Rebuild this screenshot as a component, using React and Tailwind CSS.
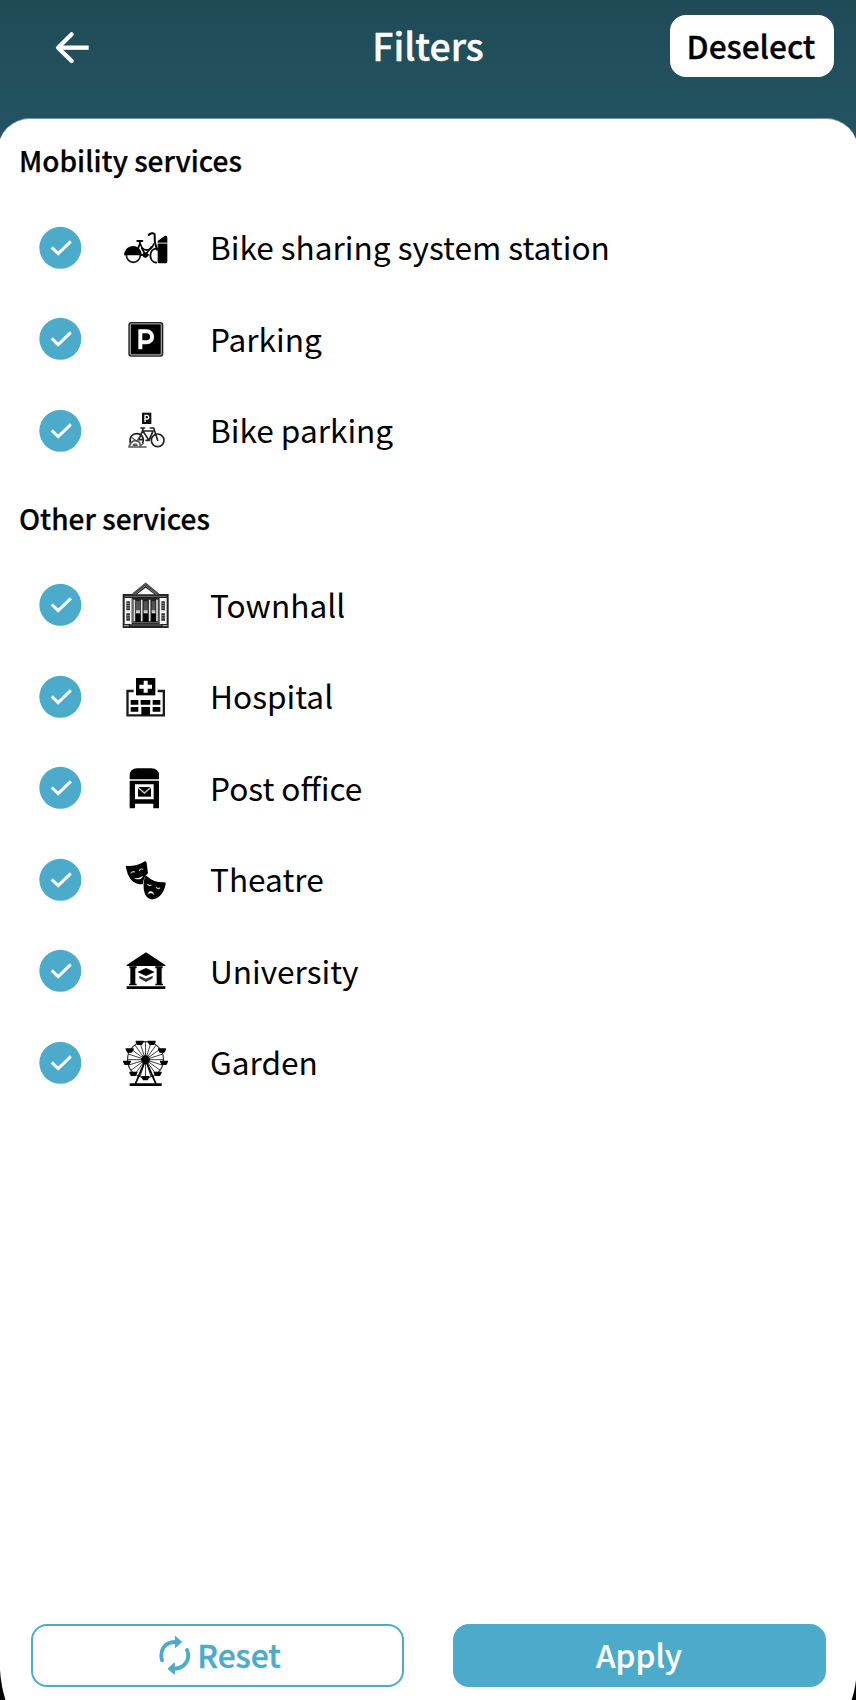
import React from "react";

const Check = () => (
  <svg viewBox="48 41 144 144" className="h-12 w-12 shrink-0">
    <circle cx="121" cy="112.500" r="63" fill="#4caaca" />
    <path d="M95 111 L114.500 130 L152.500 93" fill="none" stroke="#fff" strokeWidth="9" />
  </svg>
);

const Icon = ({ box, children }) => (
  <svg viewBox={box} className="h-12 w-12 shrink-0 overflow-visible" fill="#000">
    {children}
  </svg>
);

const BikeSharing = () => (
  <Icon box="306 41 144 144">
    <path d="M312 135 C313 118 324 107 340 107 C355 107 364 119 366 135 Z" />
    <path d="M319 134 A21 22 0 0 0 361 134" fill="none" stroke="#111" strokeWidth="5" />
    <g fill="none" stroke="#000" strokeLinecap="round" strokeLinejoin="round">
      <path d="M352 92 H367" strokeWidth="6" />
      <path d="M359 94 C362 107 365 115 374 118 C388 121 398 113 401 101" strokeWidth="5" />
      <path d="M386 74 C392 68 401 67 404 72 C405 82 402 93 407 104 L411 118" strokeWidth="6" />
      <path d="M359 100 L355 114 M365 113 L376 133 L394 110" strokeWidth="5" />
      <path d="M410 115 C386 115 384 154 409 157" strokeWidth="5.500" />
      <path d="M362 134 H384" strokeWidth="6" />
    </g>
    <circle cx="376" cy="134" r="8" />
    <path d="M413 97 L413 92 L434 77 Q442 75 442 82 V97 Z M413 101 H442 V154 Q442 159 437 159 H418 Q413 159 413 154 Z" />
    <path d="M413 99 H442" stroke="#888" strokeWidth="4" />
  </Icon>
);

const Parking = () => (
  <Icon box="306 -15 144 144">
    <rect x="325" y="6" width="105" height="104" rx="9" fill="#222" />
    <rect x="331" y="11.500" width="93" height="93" rx="4" fill="none" stroke="#999" strokeWidth="4" />
    <rect x="334" y="14" width="87" height="87" fill="#000" />
    <path d="M361 88 V34 H379 C402 34 402 67 379 67 H361" fill="none" stroke="#fff" strokeWidth="12" />
  </Icon>
);

const BikeParking = () => (
  <Icon box="306 260 144 144">
    <rect x="366" y="277" width="28" height="34" fill="#111" />
    <path d="M375 305 V285 H381 C388 285 388 296 381 296 H375" fill="none" stroke="#fff" strokeWidth="4" />
    <g fill="none" stroke="#222" strokeWidth="5" strokeLinecap="round" strokeLinejoin="round">
      <circle cx="413" cy="360" r="19" />
      <path d="M331 367 C327 349 338 340 350 340 C366 340 373 353 368 368" />
      <path d="M363 323 H374 M369 324 L368 331 L387 360 H378 M368 331 L356 358 H370 M369 332 H399 L387 360 M391 323 H401 L413 360" />
      <path d="M327 380 C331 366 339 361 347 361 C357 361 361 369 361 378 M327 380 H378" stroke="#555" />
      <path d="M339 375 C342 369 349 369 352 375 Z M336 352 L350 363 L359 349 M361 377 L370 369" stroke="#555" strokeWidth="3.500" />
    </g>
  </Icon>
);

const Townhall = () => (
  <Icon box="366 33 144 144">
    <path d="M368 72 H397 L437 38 L477 72 H506 V174 H368 Z" fill="#222" />
    <path d="M399 72 L437 41 L475 72" fill="none" stroke="#555" strokeWidth="5" />
    <path d="M404 74 L437 47 L470 74" fill="none" stroke="#888" strokeWidth="3" />
    <path d="M411 73 L437 53 L463 73 Z" fill="#fff" />
    <path d="M374 79 H500" stroke="#999" strokeWidth="2" />
    <path d="M374 84 H395 V162 H374 Z M479 84 H500 V162 H479 Z" fill="#f4f4f4" />
    <path d="M397 86 V156 M477 86 V156" stroke="#777" strokeWidth="3" />
    <path d="M379 94 H390 V121 H379 Z M379 130 H390 V152 H379 Z M484 94 H495 V121 H484 Z M484 130 H495 V152 H484 Z" fill="#333" />
    <path d="M379 100 H390 M379 107 H390 M379 114 H390 M379 137 H390 M379 144 H390 M484 100 H495 M484 107 H495 M484 114 H495 M484 137 H495 M484 144 H495" stroke="#aaa" strokeWidth="2" />
    <path d="M403 89 V154 M425 89 V154 M449 89 V154 M471 89 V154" stroke="#ddd" strokeWidth="5" />
    <path d="M408 94 H420 V121 H408 Z M431 94 H443 V121 H431 Z M455 94 H466 V121 H455 Z" fill="#555" />
    <path d="M408 121 H420 V130 H408 Z M431 121 H443 V130 H431 Z M455 121 H466 V130 H455 Z" fill="#ccc" />
    <path d="M407 132 H421 V155 H407 Z M430 132 H444 V155 H430 Z M454 132 H467 V155 H454 Z" />
    <path d="M397 158 H477 M390 165 H484" stroke="#777" strokeWidth="2.500" />
    <path d="M372 167 H386 M488 167 H502" stroke="#ddd" strokeWidth="2.500" />
  </Icon>
);

const Hospital = () => (
  <Icon box="366 307 144 144">
    <path d="M408 322 H466 V374 H408 Z" />
    <path d="M437 330 V366 M418 348 H456" stroke="#fff" strokeWidth="12" />
    <path d="M401 361 H382.500 V434 H491.500 V361 H473" fill="none" stroke="#1a1a1a" strokeWidth="7" />
    <path d="M392 388 H415 V402 H392 Z M422 388 H451 V402 H422 Z M458 388 H481 V402 H458 Z M392 409 H415 V423 H392 Z M458 409 H481 V423 H458 Z M424 409 H450 V434 H424 Z" />
  </Icon>
);

const PostOffice = () => (
  <Icon box="306 41 144 144">
    <path d="M329 86 V77 Q329 54 352 54 H394 Q417 54 417 77 V86 Z" />
    <path d="M330 89 H416" stroke="#bbb" strokeWidth="6" />
    <path fillRule="evenodd" d="M329 92 H417 V174 H400 V160 H345 V174 H329 Z M345 102 V147 H401 V102 Z" />
    <rect x="354" y="110" width="39" height="29" />
    <path d="M354 111 L373 128 L393 111" fill="none" stroke="#ccc" strokeWidth="4" />
  </Icon>
);

const Theatre = () => (
  <Icon box="306 317 144 144">
    <path d="M317 346 C340 350 361 343 374 333 Q379 331 380 338 L384 369 C375 377 370 386 369 401 C344 405 323 387 317 346 Z" />
    <path d="M374 381 Q377 373 383 379 C396 391 413 397 433 396 Q438 396 437 401 C432 429 415 449 392 447 C373 443 366 414 374 381 Z" />
    <g fill="none" stroke="#ccc" strokeLinecap="round">
      <path d="M333 368 Q338 361 344 365 M358 360 Q362 354 368 357" strokeWidth="3.500" />
      <path d="M344 383 C353 385 362 381 369 376 C368 383 361 387 352 387 C347 387 345 386 344 383 Z" fill="#fff" stroke="none" />
      <path d="M383 402 Q388 408 393 404 M409 411 Q414 417 419 413" strokeWidth="3.500" />
      <path d="M384 431 C387 419 399 421 402 433 C396 427 390 427 384 431 Z" fill="#fff" strokeWidth="1" />
    </g>
  </Icon>
);

const University = () => (
  <Icon box="306 50 144 144">
    <path d="M320 104 L378 66 L436 104 V107 H320 Z M328 108 H350 V114 H346 V160 H350 V165 H327 V160 H331 V114 H328 Z M406 108 H428 V114 H425 V160 H429 V165 H406 V160 H410 V114 H406 Z M320 168 H436 V176 H320 Z" />
    <path d="M352 125 L378 113 L404 125 L378 137 Z" />
    <path d="M358 136 L378 145 L398 136 V144 L378 155 L358 144 Z" fill="#333" />
  </Icon>
);

const spokes = Array.from({ length: 20 }, (_, i) => (i * Math.PI) / 10);
const cabins = [[359, 332], [395, 332], [329, 355], [426, 355], [321, 392], [432, 392], [340, 425], [413, 425], [376, 438]];

const Garden = () => (
  <Icon box="306 325 144 144">
    <circle cx="376.500" cy="387" r="54" fill="none" stroke="#333" strokeWidth="3.500" />
    {spokes.map((a) => (
      <path key={a} d={`M376.500 387 L${376.5 + 54 * Math.cos(a)} ${387 + 54 * Math.sin(a)}`} stroke="#333" strokeWidth="2.800" />
    ))}
    <path d="M376 389 L346 460 M377 389 L408 460" stroke="#000" strokeWidth="5.500" />
    <circle cx="376.500" cy="387" r="13" />
    {cabins.map(([x, y]) => (
      <path key={`${x}-${y}`} d={`M${x - 12} ${y - 2} H${x + 12} V${y + 2} L${x + 7} ${y + 11} H${x - 7} L${x - 12} ${y + 2} Z`} />
    ))}
    <path d="M329 458 H425 V466 H329 Z" />
  </Icon>
);

const Row = ({ label, children }) => (
  <li className="flex h-[91.5px] items-center pl-[36px]">
    <Check />
    <span className="ml-[38px] flex">{children}</span>
    <span className="ml-[40px] whitespace-nowrap pb-[3px] text-[31.6px] leading-[48px]">{label}</span>
  </li>
);

const Heading = ({ children }) => (
  <h2 className="flex h-[40px] items-center pb-[4px] pl-[19px] text-[28px] font-medium leading-[36px] [-webkit-text-stroke:0.25px_currentColor]">{children}</h2>
);

export default function App() {
  return (
    <div className="relative flex h-[1700px] w-[856px] flex-col overflow-hidden bg-linear-to-b from-[#1f4b57] from-0% to-[#245563] to-[150px] font-['Noto_Sans_CJK_SC',sans-serif] text-black">
      <header className="grid h-[118px] shrink-0 grid-cols-3 px-[22px] pt-[15px]">
        <button className="flex h-[64px] items-center pl-[32px]" aria-label="Back">
          <svg viewBox="162 91 108 102" className="h-[34px] w-[36px]" fill="none" stroke="#fff" strokeWidth="12.500">
            <path d="M215 104 L174 144 L215 184" strokeLinecap="round" strokeLinejoin="round" />
            <path d="M174 144 H266" strokeWidth="13" />
          </svg>
        </button>
        <h1 className="flex h-[60px] items-center justify-center text-[37.4px] font-medium text-white [-webkit-text-stroke:0.4px_currentColor]">Filters</h1>
        <button className="flex h-[62px] w-[164px] items-center justify-center justify-self-end rounded-[16px] bg-white pr-[2px] pb-[1px] text-[31.6px] font-medium [-webkit-text-stroke:0.3px_currentColor]">Deselect</button>
      </header>
      <main className="-mx-[2px] flex flex-1 flex-col rounded-t-[32px] border-t border-[#6f98a2] bg-white px-[2px] pt-[23px]">
        <Heading>Mobility services</Heading>
        <ul className="mt-[20px]">
          <Row label="Bike sharing system station"><BikeSharing /></Row>
          <Row label="Parking"><Parking /></Row>
          <Row label="Bike parking"><BikeParking /></Row>
        </ul>
        <div className="mt-[23px]">
          <Heading>Other services</Heading>
        </div>
        <ul className="mt-[20px]">
          <Row label="Townhall"><Townhall /></Row>
          <Row label="Hospital"><Hospital /></Row>
          <Row label="Post office"><PostOffice /></Row>
          <Row label="Theatre"><Theatre /></Row>
          <Row label="University"><University /></Row>
          <Row label="Garden"><Garden /></Row>
        </ul>
        <footer className="mt-auto mb-[13px] flex gap-[49px] pl-[31px]">
          <button className="flex h-[63px] w-[373px] items-center justify-center rounded-[16px] border-2 border-[#4caaca] pl-[4px] text-[#4caaca]">
            <svg viewBox="474 135 102 126" className="mr-[5px] h-[42px] w-[34px]" fill="none" stroke="#4caaca" strokeWidth="11.500">
              <path d="M486 211 C478 180 494 157 525 156 M561 180 C573 207 554 235 523 236" strokeLinecap="round" />
              <path d="M526 139 L545 156 L526 173 Z M523 219 V253 L504 236 Z" fill="#4caaca" strokeWidth="3" strokeLinejoin="round" />
            </svg>
            <span className="pb-[2px] text-[31.6px] font-medium [-webkit-text-stroke:0.4px_currentColor]">Reset</span>
          </button>
          <button className="flex h-[63px] w-[373px] items-center justify-center rounded-[16px] bg-[#4caaca] pr-[1px] pb-[2px] text-[31.6px] font-medium text-white [-webkit-text-stroke:0.2px_currentColor]">Apply</button>
        </footer>
      </main>
      <svg viewBox="0 0 6 30" className="absolute bottom-0 left-0 h-[30px] w-[6px]"><path d="M0 0 Q1 16 5.500 30 H0 Z" /></svg>
      <svg viewBox="0 0 6 20" className="absolute bottom-0 right-0 h-[20px] w-[6px]"><path d="M6 0 Q4.500 12 1.500 20 H6 Z" /></svg>
    </div>
  );
}
